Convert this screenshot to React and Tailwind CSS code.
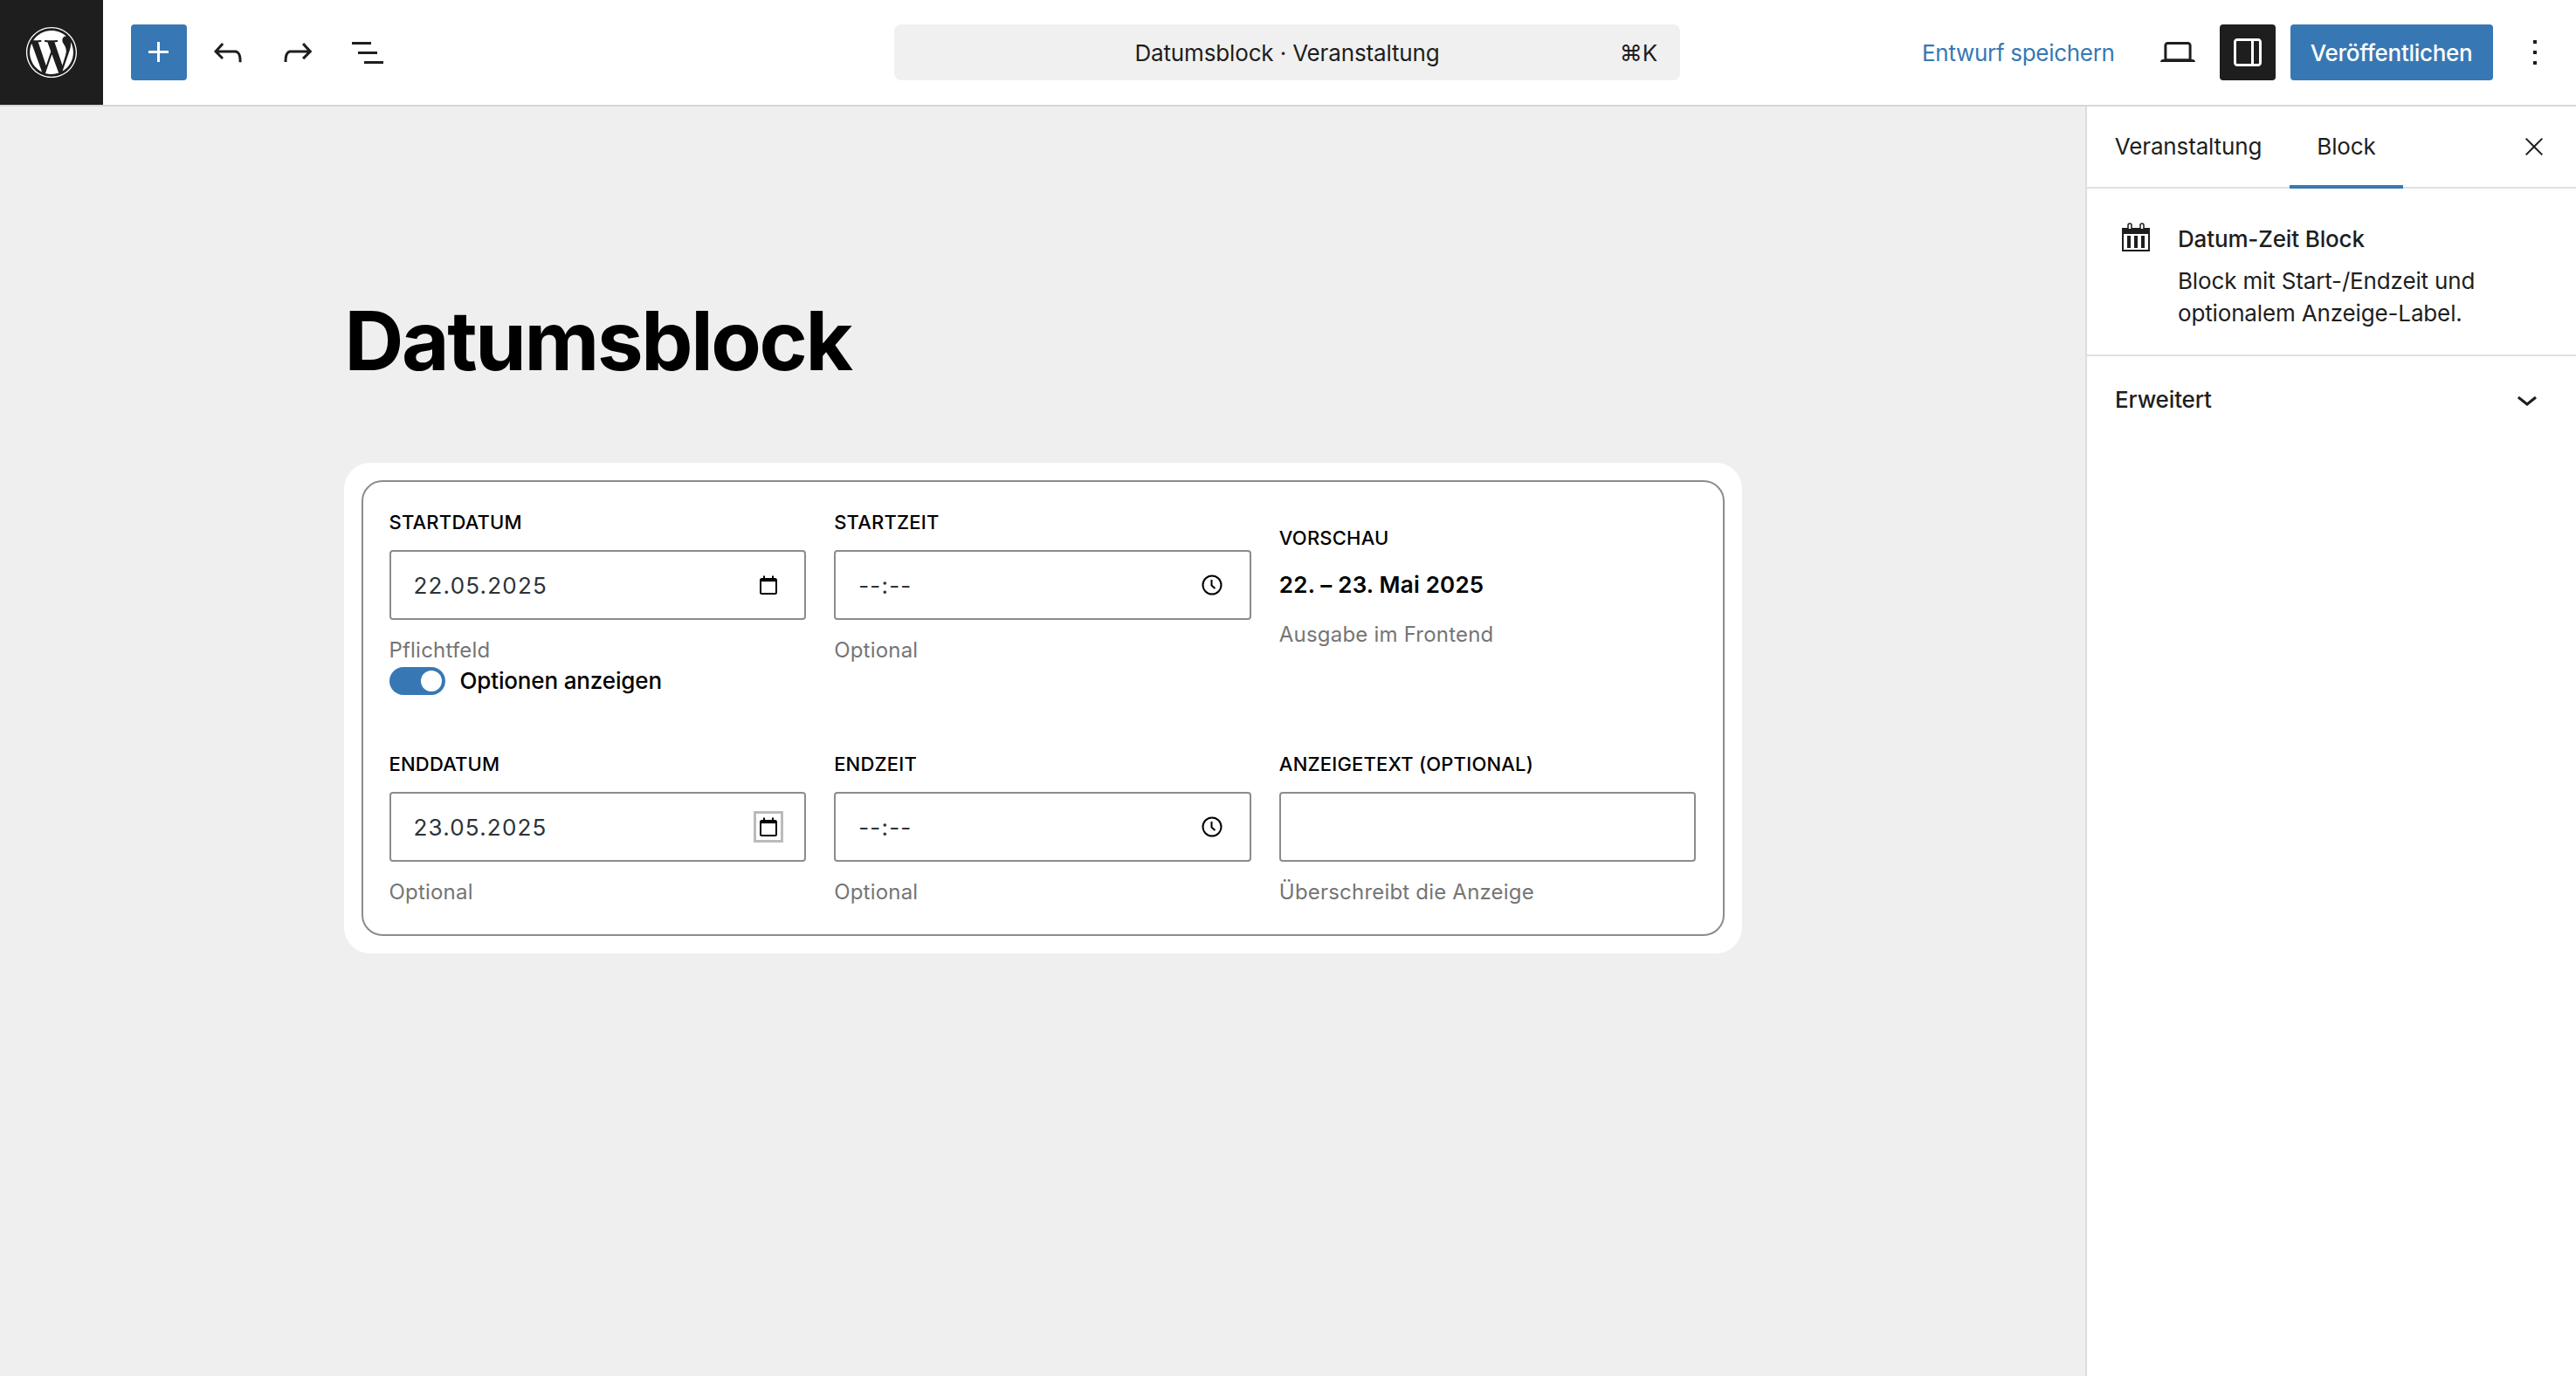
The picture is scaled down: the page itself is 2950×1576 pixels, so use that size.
import React from 'react';
import { FaWordpress } from 'react-icons/fa';

function WpIcon({ d, size = 'w-12 h-12', className = '' }) {
    return (
        <svg viewBox="0 0 24 24" fill="currentColor" className={`${size} ${className}`}>
            <path d={d} />
        </svg>
    );
}

const icons = {
    plus: 'M11 12.5V17.5H12.5V12.5H17.5V11H12.5V6H11V11H6V12.5H11Z',
    undo: 'M18.3 11.7c-.6-.6-1.4-.9-2.3-.9H6.7l2.9-3.3-1.1-1-4.5 5L8.5 16l1-1-2.7-2.7H16c.5 0 .9.2 1.3.5 1 1 1 3.4 1 4.5v.3h1.5v-.2c0-1.5 0-4.3-1.5-5.7z',
    redo: 'M15.6 6.5l-1.1 1 2.9 3.3H8c-.9 0-1.7.3-2.3.9-1.4 1.5-1.4 4.2-1.4 5.6v.2h1.5v-.3c0-1.1 0-3.5 1-4.5.3-.3.7-.5 1.3-.5h9.2L14.5 15l1.1 1.1 4.6-4.6-4.6-5z',
    list: 'M3 6h11v1.5H3V6Zm3.5 5.5h11V13h-11v-1.5ZM21 17H10v1.5h11V17Z',
    laptop: 'M20.5 16h-.7V8c0-1.1-.9-2-2-2H6.2c-1.1 0-2 .9-2 2v8h-.7c-.8 0-1.5.7-1.5 1.5h20c0-.8-.7-1.5-1.5-1.5zM5.7 8c0-.3.2-.5.5-.5h11.6c.3 0 .5.2.5.5v7.6H5.7V8z',
    sidebar: 'M18 4H6c-1.1 0-2 .9-2 2v12c0 1.1.9 2 2 2h12c1.1 0 2-.9 2-2V6c0-1.1-.9-2-2-2zm-4 14.5H6c-.3 0-.5-.2-.5-.5V6c0-.3.2-.5.5-.5h8v13zm4.5-.5c0 .3-.2.5-.5.5h-2.5v-13H18c.3 0 .5.2.5.5v12z',
    more: 'M13 19h-2v-2h2v2zm0-6h-2v-2h2v2zm0-6h-2V5h2v2z',
    close: 'm13.06 12 6.47-6.47-1.06-1.06L12 10.94 5.53 4.47 4.47 5.53 10.94 12l-6.47 6.47 1.06 1.06L12 13.06l6.47 6.47 1.06-1.06L13.06 12Z',
    chevron: 'M17.5 11.6L12 16l-5.5-4.4.9-1.2L12 14l4.5-3.6 1 1.2z',
};

function CalendarSmall() {
    return (
        <svg viewBox="0 0 20 22" className="w-5 h-[22px]" fill="none">
            <path d="M1 4.5h18v2.6H1z" fill="#000" />
            <rect x="1" y="4" width="18" height="17" rx="1.5" stroke="#000" strokeWidth="2" />
            <path d="M5 0.5v3M15 0.5v3" stroke="#000" strokeWidth="2" />
        </svg>
    );
}

function ClockSmall() {
    return (
        <svg viewBox="0 0 24 24" className="w-6 h-6" fill="none" stroke="#000" strokeWidth="2">
            <circle cx="12" cy="12" r="10.500" />
            <path d="M11.500 6v6.500l4 3.500" />
        </svg>
    );
}

function Field({ label, hint, children }) {
    return (
        <div>
            <div className="text-[22px] leading-[30px] font-medium tracking-[0.2px] text-black">{label}</div>
            <div className="mt-[17px] h-20 border-2 border-[#8c8c8c] rounded-[4px] bg-white flex items-center justify-between pl-[26px] pr-[31px] text-[26px] text-[#2c3338]">
                {children}
            </div>
            {hint && <div className="mt-[19px] text-[24px] leading-8 tracking-[0.2px] text-[#757575]">{hint}</div>}
        </div>
    );
}

export default function App() {
    return (
        <div className="h-[1576px] w-[2950px] flex flex-col overflow-hidden bg-white text-[#1e1e1e] tracking-[-0.15px] font-['Inter','Liberation_Sans',sans-serif]">
            <header className="h-[122px] shrink-0 flex border-b-2 border-[#d6d6d6] bg-white">
                <div className="w-[118px] h-[120px] bg-[#1e1e1e] flex items-center justify-center text-white">
                    <FaWordpress className="w-[60px] h-[60px]" />
                </div>

                <div className="w-[906px] flex items-center pl-8">
                    <button className="w-16 h-16 rounded-[4px] bg-[#3778b4] text-white flex items-center justify-center">
                        <WpIcon d={icons.plus} />
                    </button>
                    <WpIcon d={icons.undo} className="ml-[23px]" />
                    <WpIcon d={icons.redo} className="ml-[32px]" />
                    <WpIcon d={icons.list} className="ml-[32px]" />
                </div>

                <div className="w-[900px] flex items-center">
                    <div className="w-full h-16 rounded-[8px] bg-[#f0f0f0] relative flex items-center justify-center text-[26px]">
                        <span>Datumsblock · Veranstaltung</span>
                        <span className="absolute right-[26px]">⌘K</span>
                    </div>
                </div>

                <div className="flex-1 flex items-center pl-[277px] whitespace-nowrap">
                    <span className="text-[26px] tracking-[-0.3px] text-[#3778b4]">Entwurf speichern</span>
                    <WpIcon d={icons.laptop} className="ml-[48px]" />
                    <button className="ml-[24px] w-16 h-16 rounded-[4px] bg-[#1e1e1e] text-white flex items-center justify-center">
                        <WpIcon d={icons.sidebar} />
                    </button>
                    <button className="ml-[17px] w-[232px] h-16 rounded-[4px] bg-[#3778b4] text-white text-[26px] tracking-[-0.3px] font-medium">
                        Veröffentlichen
                    </button>
                    <WpIcon d={icons.more} className="ml-6" />
                </div>
            </header>

            <div className="flex-1 flex min-h-0">
                <main className="flex-1 bg-[#efefef]">
                    <div className="w-[1601px] mx-auto pt-[212px]">
                        <h1 className="ml-[1px] text-[94px] leading-[112px] font-bold tracking-[-0.025em] text-black">Datumsblock</h1>

                        <div className="mt-[84px] h-[562px] bg-white rounded-[30px] p-5">
                            <div className="h-full border-2 border-[#8c8c8c] rounded-[24px] px-[30px] pt-[31px] grid grid-cols-3 gap-x-8 content-start">
                                <div>
                                    <Field label="STARTDATUM" hint="Pflichtfeld">
                                        <span className="tracking-[1.2px]">22.05.2025</span>
                                        <CalendarSmall />
                                    </Field>
                                    <div className="mt-[3px] flex items-center gap-[17px]">
                                        <div className="w-16 h-8 rounded-full bg-[#3778b4] flex items-center justify-end pr-1">
                                            <div className="w-6 h-6 rounded-full bg-white" />
                                        </div>
                                        <span className="text-[26px] leading-8 font-medium text-black">Optionen anzeigen</span>
                                    </div>
                                </div>

                                <Field label="STARTZEIT" hint="Optional">
                                    <span className="tracking-[1.2px]">--:--</span>
                                    <ClockSmall />
                                </Field>

                                <div className="pt-[18px]">
                                    <div className="text-[22px] leading-[30px] font-medium tracking-[0.2px] text-black">VORSCHAU</div>
                                    <div className="mt-[23px] text-[26px] leading-[32px] font-semibold tracking-[0.2px] text-black">22. – 23. Mai 2025</div>
                                    <div className="mt-[25px] text-[24px] leading-8 tracking-[0.2px] text-[#757575]">Ausgabe im Frontend</div>
                                </div>

                                <div className="mt-[64px] col-start-1">
                                    <Field label="ENDDATUM" hint="Optional">
                                        <span className="tracking-[1.2px]">23.05.2025</span>
                                        <span className="border-[3px] border-[#bbbbbb] p-[4px] -mr-[7px] flex">
                                            <CalendarSmall />
                                        </span>
                                    </Field>
                                </div>
                                <div className="mt-[64px]">
                                    <Field label="ENDZEIT" hint="Optional">
                                        <span className="tracking-[1.2px]">--:--</span>
                                        <ClockSmall />
                                    </Field>
                                </div>
                                <div className="mt-[64px]">
                                    <Field label="ANZEIGETEXT (OPTIONAL)" hint="Überschreibt die Anzeige" />
                                </div>
                            </div>
                        </div>
                    </div>
                </main>

                <aside className="w-[562px] shrink-0 bg-white border-l-2 border-[#dddddd]">
                    <div className="h-[94px] border-b-2 border-[#e0e0e0] flex items-stretch text-[26px]">
                        <div className="w-[232px] flex items-center justify-center border-b-[4px] border-transparent -mb-[2px]">Veranstaltung</div>
                        <div className="w-[130px] flex items-center justify-center border-b-[4px] border-[#3778b4] -mb-[2px]">Block</div>
                        <div className="flex-1 flex items-center justify-end pr-8">
                            <WpIcon d={icons.close} size="w-8 h-8" />
                        </div>
                    </div>

                    <div className="h-[192px] border-b-2 border-[#e0e0e0] flex pl-[40px] pt-[39px]">
                        <svg viewBox="0 0 32 33" className="w-8 h-[33px] shrink-0" fill="#1e1e1e">
                            <path d="M0 6h32v27H0zM2 13v18h28V13z" fillRule="evenodd" />
                            <path d="M7 7V3a2 2 0 0 1 4 0v4M21 7V3a2 2 0 0 1 4 0v4" fill="#fff" stroke="#1e1e1e" strokeWidth="1.500" />
                            <path d="M6 15h4v14H6zM14 15h4v14h-4zM22 15h4v14h-4z" />
                        </svg>
                        <div className="ml-[32px]">
                            <div className="text-[26px] leading-[37px] font-medium">Datum-Zeit Block</div>
                            <div className="mt-[11px] text-[26px] leading-[37px]">
                                Block mit Start-/Endzeit und
                                <br />
                                optionalem Anzeige-Label.
                            </div>
                        </div>
                    </div>

                    <div className="h-[98px] flex items-center justify-between pl-[32px] pr-[32px] text-[26px] font-medium">
                        <span>Erweitert</span>
                        <WpIcon d={icons.chevron} />
                    </div>
                </aside>
            </div>
        </div>
    );
}
